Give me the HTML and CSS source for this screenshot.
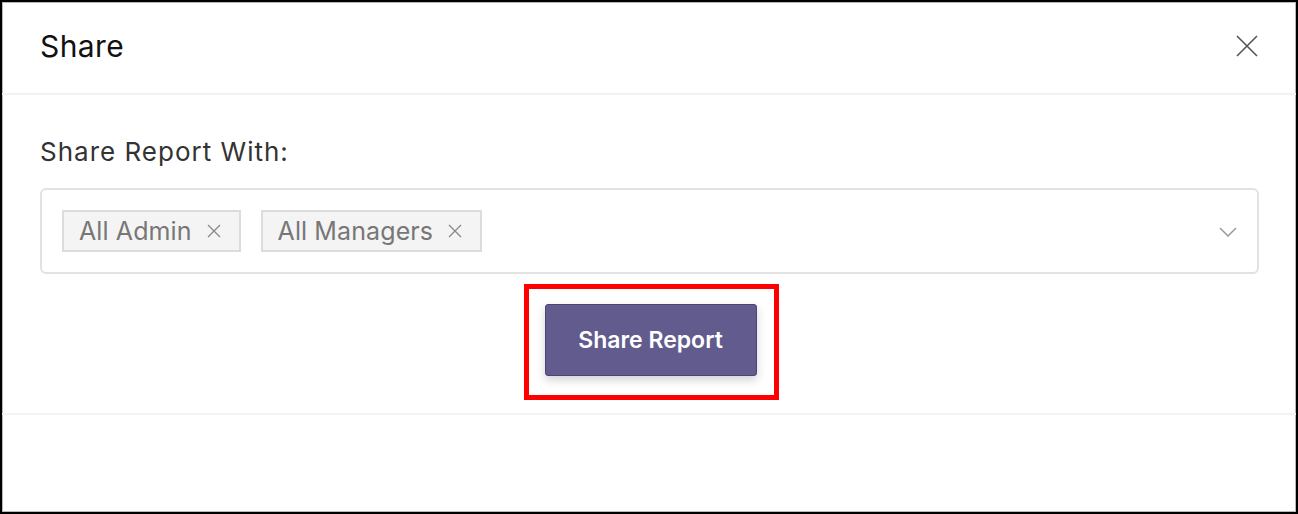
FILE: index.html
```html
<!DOCTYPE html>
<html>
<head>
<meta charset="utf-8">
<link rel="stylesheet" href="styles.css">
</head>
<body>
<div class="frame">
  <div class="header">
    <div class="title">Share</div>
    <button class="close" aria-label="Close">
      <svg width="22" height="22" viewBox="0 0 22 22"><path d="M1 1L21 21M21 1L1 21" stroke="#555" stroke-width="1.6" fill="none"/></svg>
    </button>
  </div>
  <div class="body">
    <div class="label">Share Report With:</div>
    <div class="select">
      <div class="chips">
        <span class="chip">All Admin <svg class="x" width="14" height="14" viewBox="0 0 14 14"><path d="M1 1L13 13M13 1L1 13" stroke="#888" stroke-width="1.3" fill="none"/></svg></span>
        <span class="chip">All Managers <svg class="x" width="14" height="14" viewBox="0 0 14 14"><path d="M1 1L13 13M13 1L1 13" stroke="#888" stroke-width="1.3" fill="none"/></svg></span>
      </div>
      <svg class="chev" width="18" height="10" viewBox="0 0 18 10"><path d="M1 1L9 9L17 1" stroke="#999" stroke-width="1.5" fill="none"/></svg>
    </div>
    <div class="actions">
      <div class="highlight">
        <button class="primary">Share Report</button>
      </div>
    </div>
  </div>
  <div class="footer"></div>
</div>
</body>
</html>
```
FILE: styles.css
```css
* { box-sizing: border-box; }
html, body { margin: 0; padding: 0; background: #fff; }
body { font-family: Inter, "Open Sans", sans-serif; }
.frame {
  width: 1298px;
  height: 514px;
  border: 2px solid #000;
  box-shadow: inset 0 0 0 1px #b8b8b8;
  display: flex;
  flex-direction: column;
  background: #fff;
}
.header {
  height: 93px;
  flex: none;
  display: flex;
  align-items: center;
  justify-content: space-between;
  padding: 0 38px 4px 38px;
  border-bottom: 2px solid #f2f2f2;
}
.title {
  font-size: 30px;
  letter-spacing: 0.4px;
  color: #111;
  font-weight: 400;
}
.close {
  background: none;
  border: 0;
  padding: 0;
  margin: 0;
  display: flex;
}
.body {
  height: 320px;
  flex: none;
  padding: 0 37px 0 38px;
  border-bottom: 2px solid #f4f4f4;
}
.label {
  margin-top: 40px;
  font-size: 26px;
  letter-spacing: 1px;
  color: #333;
  line-height: 34px;
}
.select {
  margin-top: 19px;
  height: 86px;
  border: 2px solid #e2e2e2;
  border-radius: 6px;
  display: flex;
  align-items: center;
  justify-content: space-between;
  padding: 0 20px 0 20px;
}
.chips { display: flex; gap: 20px; }
.chip {
  display: inline-flex;
  align-items: center;
  gap: 15px;
  height: 42px;
  padding: 0 18px 0 15px;
  background: #f4f4f4;
  border: 2px solid #dcdcdc;
  font-size: 25px;
  letter-spacing: 0.1px;
  color: #777;
}
.chev { margin-top: 2px; }
.actions {
  display: flex;
  justify-content: center;
  margin-top: 10px;
  padding-left: 3px;
}
.highlight {
  border: 5px solid #ff0000;
  padding: 15px 17px 19px 16px;
}
.primary {
  width: 212px;
  height: 72px;
  background: #625b8d;
  border: 1px solid #4b4577;
  border-radius: 3px;
  color: #fff;
  font-family: Inter, sans-serif;
  font-weight: 600;
  font-size: 23px;
  box-shadow: 0 4px 10px rgba(0,0,0,0.18);
}
.footer { flex: 1; }
```
